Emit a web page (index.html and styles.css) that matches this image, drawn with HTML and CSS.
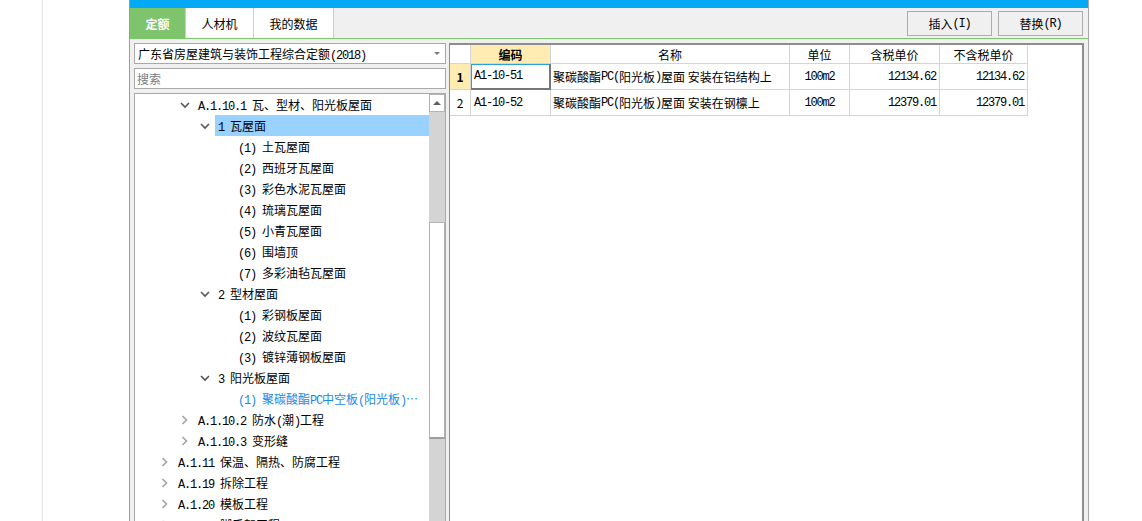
FILE: index.html
```html
<!DOCTYPE html>
<html lang="zh-CN">
<head>
<meta charset="utf-8">
<title>定额</title>
<link rel="stylesheet" href="styles.css">
</head>
<body>
<div class="page">
  <div class="gutter"></div>
  <div class="window">
    <div class="titlebar"></div>
    <div class="toolbar">
      <div class="tab active">定额</div>
      <div class="tab w68">人材机</div>
      <div class="tab w80">我的数据</div>
      <div class="spacer"></div>
      <div class="tools">
        <div class="btn">插入<span class="m">(I)</span></div>
        <div class="btn">替换<span class="m">(R)</span></div>
      </div>
    </div>
    <div class="content">
      <div class="left">
        <div class="combo"><span>广东省房屋建筑与装饰工程综合定额<span class="m">(2018)</span></span><span class="caret"></span></div>
        <div class="search">搜索</div>
        <div class="tree">
          <div class="items">
            <div class="row l1"><span class="tg"><svg width="10" height="10" viewBox="0 0 10 10"><polyline class="dn" points="1,3 5,7 9,3"/></svg></span><span class="lbl"><span class="m">A.1.10.1 </span>瓦、型材、阳光板屋面</span></div>
            <div class="row l2 sel"><span class="tg"><svg width="10" height="10" viewBox="0 0 10 10"><polyline class="dn" points="1,3 5,7 9,3"/></svg></span><span class="lbl"><span class="m">1 </span>瓦屋面</span></div>
            <div class="row l3"><span class="tg"></span><span class="lbl"><span class="m">(1) </span>土瓦屋面</span></div>
            <div class="row l3"><span class="tg"></span><span class="lbl"><span class="m">(2) </span>西班牙瓦屋面</span></div>
            <div class="row l3"><span class="tg"></span><span class="lbl"><span class="m">(3) </span>彩色水泥瓦屋面</span></div>
            <div class="row l3"><span class="tg"></span><span class="lbl"><span class="m">(4) </span>琉璃瓦屋面</span></div>
            <div class="row l3"><span class="tg"></span><span class="lbl"><span class="m">(5) </span>小青瓦屋面</span></div>
            <div class="row l3"><span class="tg"></span><span class="lbl"><span class="m">(6) </span>围墙顶</span></div>
            <div class="row l3"><span class="tg"></span><span class="lbl"><span class="m">(7) </span>多彩油毡瓦屋面</span></div>
            <div class="row l2"><span class="tg"><svg width="10" height="10" viewBox="0 0 10 10"><polyline class="dn" points="1,3 5,7 9,3"/></svg></span><span class="lbl"><span class="m">2 </span>型材屋面</span></div>
            <div class="row l3"><span class="tg"></span><span class="lbl"><span class="m">(1) </span>彩钢板屋面</span></div>
            <div class="row l3"><span class="tg"></span><span class="lbl"><span class="m">(2) </span>波纹瓦屋面</span></div>
            <div class="row l3"><span class="tg"></span><span class="lbl"><span class="m">(3) </span>镀锌薄钢板屋面</span></div>
            <div class="row l2"><span class="tg"><svg width="10" height="10" viewBox="0 0 10 10"><polyline class="dn" points="1,3 5,7 9,3"/></svg></span><span class="lbl"><span class="m">3 </span>阳光板屋面</span></div>
            <div class="row l3 link"><span class="tg"></span><span class="lbl"><span class="m">(1) </span>聚碳酸酯<span class="m">PC</span>中空板<span class="m">(</span>阳光板<span class="m">)</span>…</span></div>
            <div class="row l1"><span class="tg"><svg width="10" height="10" viewBox="0 0 10 10"><polyline class="rt" points="2.5,1 6.5,5 2.5,9"/></svg></span><span class="lbl"><span class="m">A.1.10.2 </span>防水<span class="m">(</span>潮<span class="m">)</span>工程</span></div>
            <div class="row l1"><span class="tg"><svg width="10" height="10" viewBox="0 0 10 10"><polyline class="rt" points="2.5,1 6.5,5 2.5,9"/></svg></span><span class="lbl"><span class="m">A.1.10.3 </span>变形缝</span></div>
            <div class="row l0"><span class="tg"><svg width="10" height="10" viewBox="0 0 10 10"><polyline class="rt" points="2.5,1 6.5,5 2.5,9"/></svg></span><span class="lbl"><span class="m">A.1.11 </span>保温、隔热、防腐工程</span></div>
            <div class="row l0"><span class="tg"><svg width="10" height="10" viewBox="0 0 10 10"><polyline class="rt" points="2.5,1 6.5,5 2.5,9"/></svg></span><span class="lbl"><span class="m">A.1.19 </span>拆除工程</span></div>
            <div class="row l0"><span class="tg"><svg width="10" height="10" viewBox="0 0 10 10"><polyline class="rt" points="2.5,1 6.5,5 2.5,9"/></svg></span><span class="lbl"><span class="m">A.1.20 </span>模板工程</span></div>
            <div class="row l0"><span class="tg"><svg width="10" height="10" viewBox="0 0 10 10"><polyline class="rt" points="2.5,1 6.5,5 2.5,9"/></svg></span><span class="lbl"><span class="m">A.1.21 </span>脚手架工程</span></div>
          </div>
          <div class="sb">
            <div class="sb-up"><span class="tri"></span></div>
            <div class="sb-track-top"></div>
            <div class="sb-thumb"></div>
          </div>
        </div>
      </div>
      <div class="grid">
        <div class="gtable">
          <div class="c h"></div>
          <div class="c h hl">编码</div>
          <div class="c h">名称</div>
          <div class="c h">单位</div>
          <div class="c h">含税单价</div>
          <div class="c h">不含税单价</div>

          <div class="c rn hl">1</div>
          <div class="c code sel"><span class="m">A1-10-51</span></div>
          <div class="c name">聚碳酸酯<span class="m">PC(</span>阳光板<span class="m">)</span>屋面 安装在铝结构上</div>
          <div class="c unit"><span class="m">100m2</span></div>
          <div class="c num"><span class="m">12134.62</span></div>
          <div class="c num"><span class="m">12134.62</span></div>

          <div class="c rn">2</div>
          <div class="c code"><span class="m">A1-10-52</span></div>
          <div class="c name">聚碳酸酯<span class="m">PC(</span>阳光板<span class="m">)</span>屋面 安装在钢檩上</div>
          <div class="c unit"><span class="m">100m2</span></div>
          <div class="c num"><span class="m">12379.01</span></div>
          <div class="c num"><span class="m">12379.01</span></div>
        </div>
      </div>
    </div>
  </div>
</div>
</body>
</html>
```
FILE: styles.css
```css
* { box-sizing: border-box; }
html, body { margin: 0; padding: 0; }
body {
  width: 1142px;
  height: 521px;
  overflow: hidden;
  background: #fff;
  font-family: "Noto Sans CJK SC", "Noto Sans", sans-serif;
  font-size: 12px;
  color: #000;
}
.m {
  font-family: "Liberation Mono", "DejaVu Sans Mono", monospace;
  font-size: 12px;
  letter-spacing: -1.2px;
  white-space: pre;
}
.page { display: flex; height: 521px; }
.gutter { width: 43px; flex: none; border-right: 1px solid #e4e4e4; }
.window {
  margin-left: 86px;
  width: 960px;
  height: 620px;
  flex: none;
  border-left: 1px solid #9c9c9c;
  border-right: 1px solid #a6a6a6;
  background: #f0f0f0;
  display: flex;
  flex-direction: column;
}
.titlebar { height: 8px; flex: none; background: #03a9f4; }
.toolbar {
  height: 31px;
  flex: none;
  display: flex;
  border-bottom: 1px solid #7cc86b;
}
.tab {
  display: flex;
  align-items: center;
  justify-content: center;
  background: #fff;
  border-right: 1px solid #b7e2ab;
}
.tab.active {
  width: 56px;
  background: #7ec46c;
  border-right-color: #b7e2ab;
  color: #fff;
  font-weight: bold;
}
.tab.w68 { width: 68px; }
.tab.w80 { width: 80px; }
.spacer { flex: 1; }
.tools { display: flex; gap: 6px; margin-right: 5px; padding-top: 3px; }
.btn {
  width: 85px;
  height: 25px;
  border: 1px solid #adadad;
  background: #f0f0f0;
  display: flex;
  align-items: center;
  justify-content: center;
}
.content {
  flex: 1;
  min-height: 0;
  display: flex;
  gap: 3px;
  padding: 4px 4px 0 4px;
}
.left {
  width: 312px;
  flex: none;
  display: flex;
  flex-direction: column;
  gap: 4px;
}
.combo {
  height: 21px;
  flex: none;
  border: 1px solid #a9a9a9;
  background: #fff;
  display: flex;
  align-items: center;
  justify-content: space-between;
  padding: 0 5px 0 3px;
  white-space: nowrap;
}
.caret {
  width: 0;
  height: 0;
  border-left: 3px solid transparent;
  border-right: 3px solid transparent;
  border-top: 3px solid #7a7a7a;
}
.search {
  height: 21px;
  flex: none;
  border: 1px solid #a9a9a9;
  background: #fff;
  display: flex;
  align-items: center;
  padding-left: 2px;
  color: #7c7c7c;
}
.tree {
  flex: 1;
  min-height: 0;
  display: flex;
  border: 1px solid #a9a9a9;
  background: #fff;
}
.items { flex: 1; overflow: hidden; }
.row {
  height: 21px;
  display: flex;
  align-items: center;
  white-space: nowrap;
}
.l0 { padding-left: 22px; }
.l1 { padding-left: 42px; }
.l2 { padding-left: 62px; }
.l3 { padding-left: 82px; }
.tg {
  width: 18px;
  height: 21px;
  flex: none;
  display: flex;
  align-items: center;
  padding-left: 3px;
}
.tg svg { display: block; }
.tg polyline { fill: none; stroke-width: 1.6; }
.tg .dn { stroke: #555; }
.tg .rt { stroke: #a3a3a3; }
.lbl {
  flex: 1;
  height: 21px;
  line-height: 21px;
  padding-left: 3px;
  overflow: hidden;
}
.row.sel .lbl { background: #99d1ff; }
.row.link .lbl { color: #1b8ae6; }
.sb {
  width: 16px;
  flex: none;
  display: flex;
  flex-direction: column;
  background: #d4d4d4;
}
.sb-up {
  height: 18px;
  flex: none;
  background: #fff;
  border: 1px solid #b3b3b3;
  display: flex;
  align-items: center;
  justify-content: center;
}
.tri {
  width: 0;
  height: 0;
  border-left: 4px solid transparent;
  border-right: 4px solid transparent;
  border-bottom: 4px solid #5f5f5f;
}
.sb-track-top { height: 110px; flex: none; }
.sb-thumb {
  height: 217px;
  flex: none;
  background: #fff;
  border: 1px solid #b3b3b3;
  border-bottom: 2px solid #9e9e9e;
}
.grid {
  flex: 1;
  background: #fff;
  border-top: 2px solid #8e8e8e;
  border-left: 1px solid #8e8e8e;
  border-right: 2px solid #8e8e8e;
}
.gtable {
  display: grid;
  grid-template-columns: 21px 80px 239px 60px 90px 88px;
  grid-template-rows: 19px;
  grid-auto-rows: 26px;
  width: max-content;
}
.c {
  display: flex;
  align-items: center;
  border-right: 1px solid #d4d4d4;
  border-bottom: 1px solid #d4d4d4;
  white-space: nowrap;
  overflow: hidden;
}
.h { justify-content: center; }
.hl { background: #ffecb3; font-weight: bold; }
.rn { justify-content: center; }
.code { padding-left: 3px; }
.code.sel {
  border-right: 2px solid #767676;
  border-bottom: 2px solid #767676;
  box-shadow: inset 1px 1px 0 #2aa0e4;
}
.name { padding-left: 2px; }
.unit { justify-content: center; }
.num { justify-content: flex-end; padding-right: 3px; }
```
